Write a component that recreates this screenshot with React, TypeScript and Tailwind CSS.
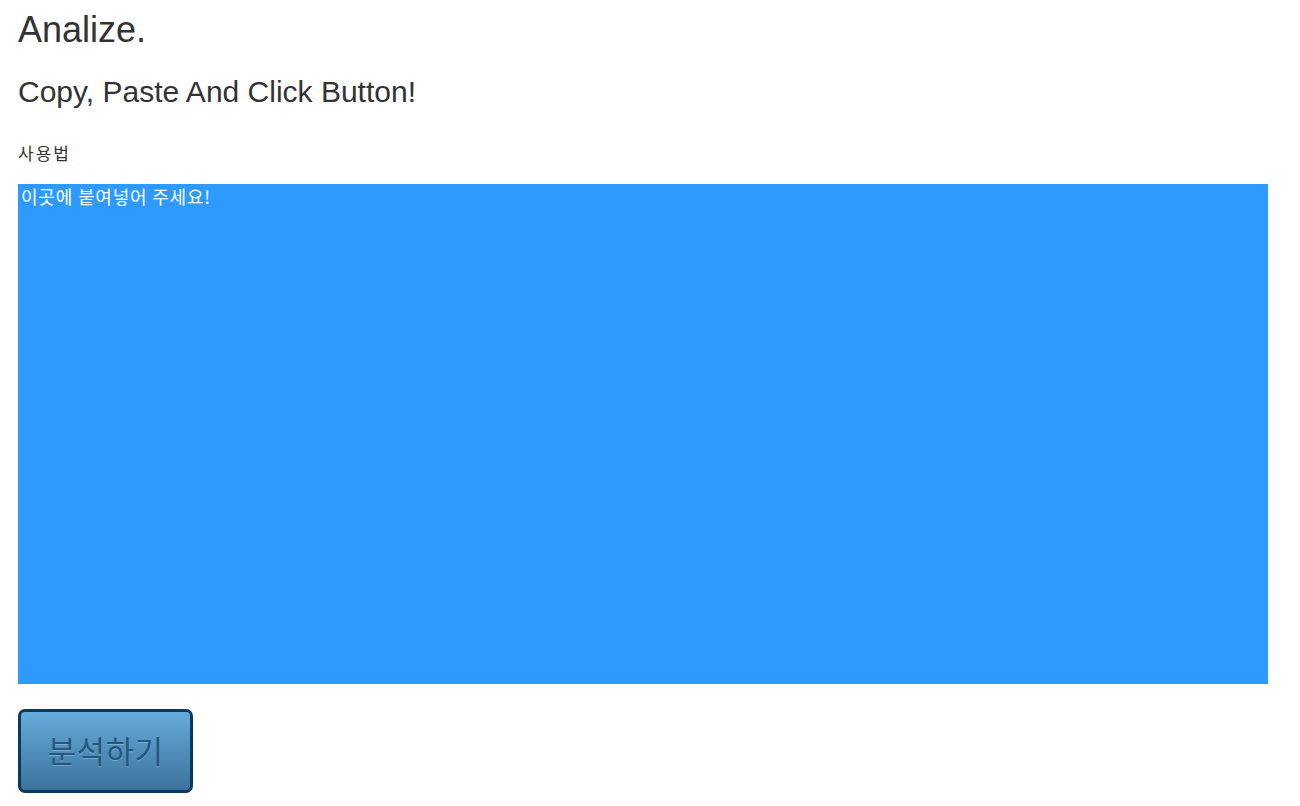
export default function App() {
  return (
    <div className="min-h-screen bg-white px-[18px] text-[#333333] font-['Liberation_Sans','Noto_Sans_CJK_KR',sans-serif]">
      <h1 className="pt-[10px] text-[36px] leading-[1.1] font-normal">Analize.</h1>
      <h2 className="mt-[25px] text-[30px] leading-[1.1] font-normal">Copy, Paste And Click Button!</h2>

      <form className="mt-[35px]" onSubmit={(e) => e.preventDefault()}>
        <label htmlFor="src" className="block text-[17px] leading-[20px] tracking-[2px] font-normal font-['Noto_Sans_CJK_KR',sans-serif]">
          사용법
        </label>
        <textarea
          id="src"
          className="mt-[21px] block w-[1250px] h-[500px] resize-none bg-[#2e9afe] px-[3px] py-[0px] text-[18px] leading-[24px] tracking-[0.8px] text-white outline-none font-['Noto_Sans_CJK_KR',sans-serif]"
          defaultValue="이곳에 붙여넣어 주세요!"
        />
        <button
          type="submit"
          className="mt-[25px] w-[175px] h-[84px] rounded-[7px] border-[3px] border-[#0c3a5c] bg-gradient-to-b from-[#66acdb] to-[#3c739c] text-[31px] tracking-[0.5px] text-[#24567e] [text-shadow:0_1px_0_rgba(255,255,255,0.25)] font-['Noto_Sans_CJK_KR',sans-serif]"
        >
          분석하기
        </button>
      </form>
    </div>
  );
}
